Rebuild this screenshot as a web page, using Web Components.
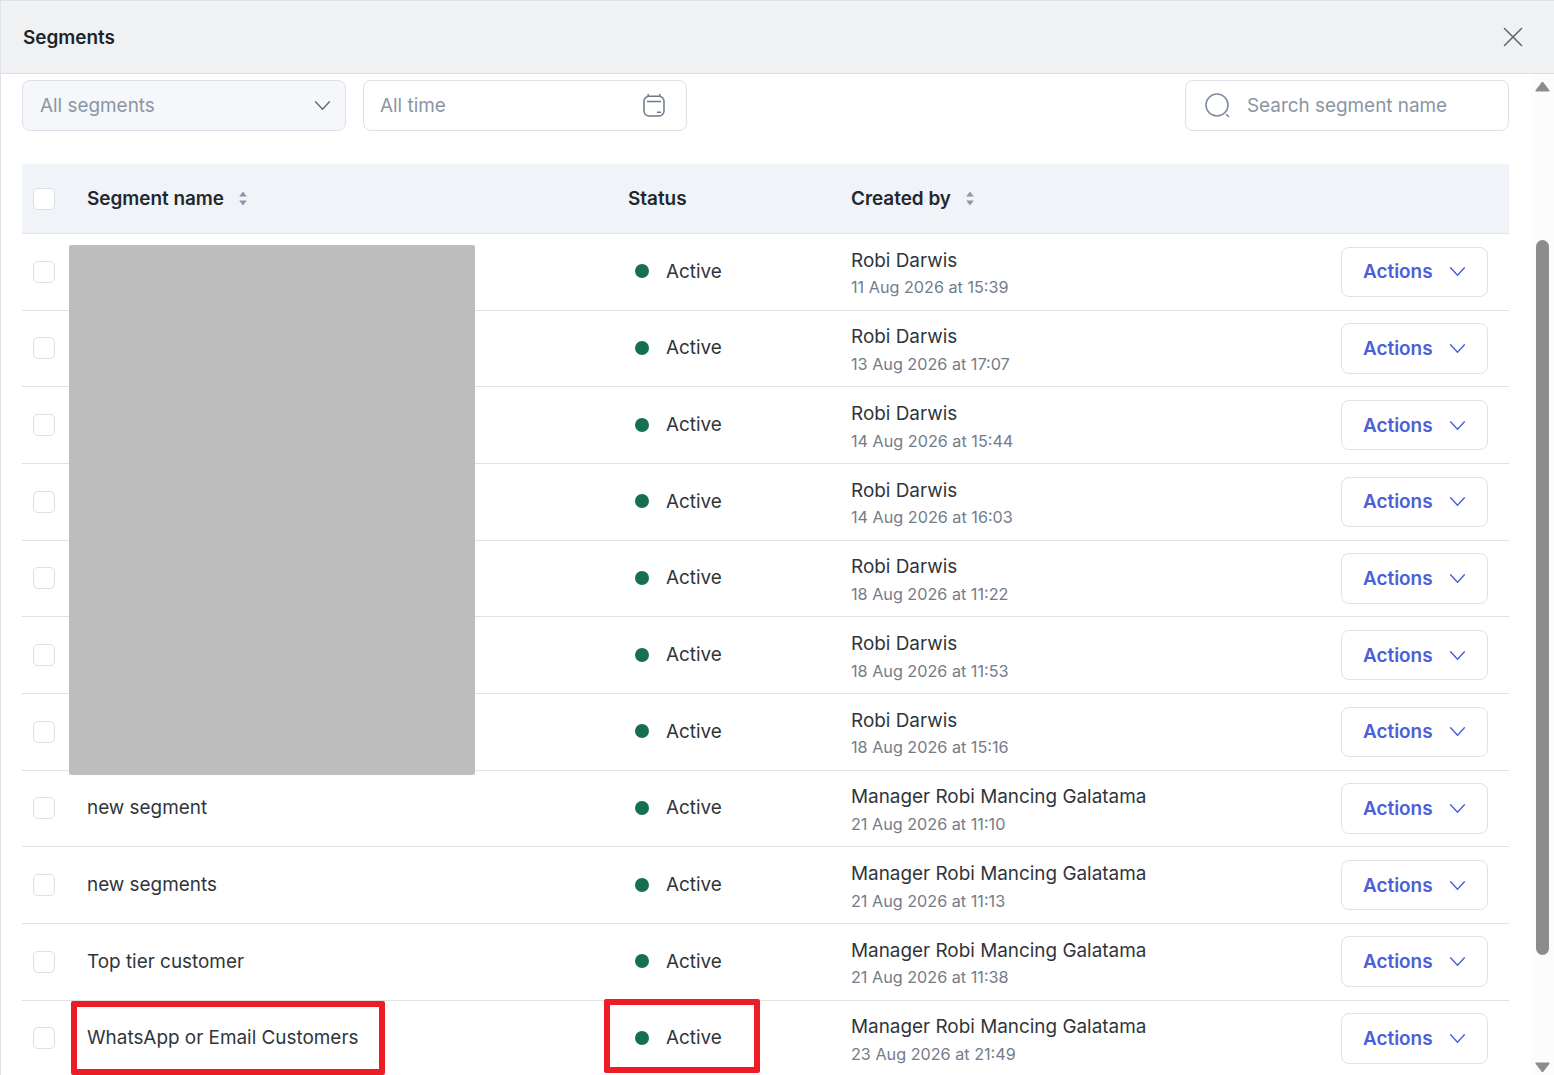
<!DOCTYPE html>
<html lang="en">

<head>
    <meta charset="UTF-8">
    <title>Segments</title>
    <style>
        html, body { margin: 0; height: 100%; overflow: hidden; background: #fff; }
        body { font-family: Inter, "Liberation Sans", sans-serif; }
    </style>
</head>

<body>
    <segments-page></segments-page>
    <script>
        const chevron = (color, w) => `<svg width="${w}" height="${w}" viewBox="0 0 16 16" fill="none" stroke="${color}" stroke-width="1.3" stroke-linecap="round" stroke-linejoin="round"><path d="M1.5 4.5 8 11.5l6.5-7"/></svg>`;

        customElements.define('modal-header', class extends HTMLElement {
            constructor() {
                super().attachShadow({ mode: 'open' }).innerHTML = `
          <style>
            :host {
              display: flex;
              align-items: center;
              justify-content: space-between;
              box-sizing: border-box;
              height: 74px;
              padding: 0 31px 0 22px;
              background: #eff1f3;
              border-top: 1px solid #dde1e8;
              border-bottom: 1px solid #dcdfe4;
            }
            h1 { margin: 0; font-size: 18.9px; font-weight: 600; color: #1f2429; }
            svg { display: block; }
          </style>
          <h1><slot></slot></h1>
          <svg width="20" height="20" viewBox="0 0 20 20" fill="none" stroke="#5d6875" stroke-width="1.6" stroke-linecap="round"><path d="M1.5 1.5l17 17M18.5 1.5l-17 17"/></svg>`;
            }
        });

        customElements.define('filter-box', class extends HTMLElement {
            constructor() {
                super().attachShadow({ mode: 'open' }).innerHTML = `
          <style>
            :host {
              display: flex;
              align-items: center;
              gap: 17px;
              box-sizing: border-box;
              width: 324px;
              height: 51px;
              padding: 0 20px 0 16px;
              border: 1px solid #dcdfe6;
              border-radius: 8px;
              background: #fff;
              color: #8b95a5;
              font-size: 18.9px;
            }
            :host([filled]) { background: #f6f7fa; padding: 0 14px 0 17px; }
            :host([reverse]) { flex-direction: row-reverse; justify-content: space-between; }
            :host([search]) { gap: 16px; padding-left: 18px; }
            .txt { flex: 1; }
            ::slotted(svg) { display: block; flex: none; }
          </style>
          <slot name="icon"></slot><span class="txt"><slot></slot></span>`;
            }
        });

        customElements.define('sort-arrows', class extends HTMLElement {
            constructor() {
                super().attachShadow({ mode: 'open' }).innerHTML = `
          <style>
            :host { display: inline-block; width: 10px; height: 15px; margin-left: 14px; }
            svg { display: block; }
          </style>
          <svg width="10" height="15" viewBox="0 0 10 15" fill="#8d97a8"><path d="M5 .5 8.8 5.5H1.2zM5 14.5 1.2 9.5h7.6z"/></svg>`;
            }
        });

        customElements.define('seg-check', class extends HTMLElement {
            constructor() {
                super().attachShadow({ mode: 'open' }).innerHTML = `
          <style>
            :host {
              display: block;
              box-sizing: border-box;
              width: 22px;
              height: 22px;
              margin-left: 11px;
              border: 1px solid #dcdfe4;
              border-radius: 5px;
              background: #fff;
            }
          </style>`;
            }
        });

        customElements.define('table-head', class extends HTMLElement {
            constructor() {
                super().attachShadow({ mode: 'open' }).innerHTML = `
          <style>
            :host {
              display: grid;
              grid-template-columns: 65px 541px 223px 1fr;
              align-items: center;
              box-sizing: border-box;
              height: 70px;
              background: #f0f3f8;
              border-bottom: 1px solid #dfe2e7;
              font-size: 18.9px;
              font-weight: 600;
              color: #23282d;
            }
            div { display: flex; align-items: center; }
          </style>
          <seg-check></seg-check>
          <div>Segment name<sort-arrows></sort-arrows></div>
          <div>Status</div>
          <div>Created by<sort-arrows></sort-arrows></div>`;
            }
        });

        customElements.define('actions-button', class extends HTMLElement {
            constructor() {
                super().attachShadow({ mode: 'open' }).innerHTML = `
          <style>
            :host {
              display: flex;
              align-items: center;
              justify-content: space-between;
              box-sizing: border-box;
              width: 147px;
              height: 50.5px;
              padding: 0 21px;
              border: 1px solid #dfe1e9;
              border-radius: 8px;
              color: #4a5fd9;
              font-size: 18.9px;
              font-weight: 600;
            }
            svg { display: block; }
          </style>
          Actions${chevron('#4a5fd9', 17)}`;
            }
        });

        customElements.define('segment-row', class extends HTMLElement {
            constructor() {
                super().attachShadow({ mode: 'open' }).innerHTML = `
          <style>
            :host {
              display: grid;
              grid-template-columns: 65px 541px 223px 1fr auto;
              align-items: center;
              box-sizing: border-box;
              height: 76.67px;
              padding-right: 21px;
              border-bottom: 1px solid #e0e1e5;
              font-size: 18.9px;
              color: #2f353b;
            }
            .name { margin-bottom: 1px; }
            .status { display: flex; align-items: center; gap: 17px; padding-left: 7px; margin-bottom: 1px; }
            .dot { width: 14px; height: 14px; border-radius: 50%; background: #17704d; }
            .who { line-height: 27.5px; margin-top: 5px; }
            .when { color: #737c8a; font-size: 16.2px; }
          </style>
          <seg-check></seg-check>
          <div class="name"><slot></slot></div>
          <div class="status"><span class="dot"></span><span>Active</span></div>
          <div class="who"><div>${this.getAttribute('by')}</div><div class="when">${this.getAttribute('at')}</div></div>
          <actions-button></actions-button>`;
            }
        });

        customElements.define('scroll-rail', class extends HTMLElement {
            constructor() {
                super().attachShadow({ mode: 'open' }).innerHTML = `
          <style>
            :host {
              display: flex;
              flex-direction: column;
              align-items: center;
              box-sizing: border-box;
              flex: none;
              width: 23px;
              padding-top: 7px;
              background: #fcfcfc;
            }
            svg { display: block; flex: none; }
            .thumb { width: 13px; height: 715px; margin: 148px 0 107px; flex: none; border-radius: 7px; background: #8c8c8c; }
          </style>
          <svg width="15" height="11" viewBox="0 0 15 11" fill="#8c8c8c" stroke="#8c8c8c" stroke-width="1.5" stroke-linejoin="round"><path d="M7.5 1.5 13.8 9.8H1.2z"/></svg>
          <div class="thumb"></div>
          <svg width="15" height="11" viewBox="0 0 15 11" fill="#8c8c8c" stroke="#8c8c8c" stroke-width="1.5" stroke-linejoin="round"><path d="M7.5 9.5 1.2 1.2h12.6z"/></svg>`;
            }
        });

        customElements.define('segments-page', class extends HTMLElement {
            constructor() {
                const rows = [
                    ['', 'Robi Darwis', '11 Aug 2026 at 15:39'],
                    ['', 'Robi Darwis', '13 Aug 2026 at 17:07'],
                    ['', 'Robi Darwis', '14 Aug 2026 at 15:44'],
                    ['', 'Robi Darwis', '14 Aug 2026 at 16:03'],
                    ['', 'Robi Darwis', '18 Aug 2026 at 11:22'],
                    ['', 'Robi Darwis', '18 Aug 2026 at 11:53'],
                    ['', 'Robi Darwis', '18 Aug 2026 at 15:16'],
                    ['new segment', 'Manager Robi Mancing Galatama', '21 Aug 2026 at 11:10'],
                    ['new segments', 'Manager Robi Mancing Galatama', '21 Aug 2026 at 11:13'],
                    ['Top tier customer', 'Manager Robi Mancing Galatama', '21 Aug 2026 at 11:38'],
                    ['WhatsApp or Email Customers', 'Manager Robi Mancing Galatama', '23 Aug 2026 at 21:49']
                ];
                super().attachShadow({ mode: 'open' }).innerHTML = `
          <style>
            :host {
              display: flex;
              flex-direction: column;
              position: relative;
              box-sizing: border-box;
              height: 1075px;
              overflow: hidden;
              border-left: 1px solid #dde1e8;
            }
            .body { display: flex; flex: 1; min-height: 0; }
            .main { flex: 1; min-width: 0; padding: 6px 22px 0 21px; }
            .filters { display: flex; gap: 17px; margin-bottom: 33px; }
            .filters .push { margin-left: auto; }
            .redact { position: absolute; left: 67.5px; top: 245px; width: 406.5px; height: 529.5px; background: #bdbdbd; border-radius: 2px; }
            .mark { position: absolute; box-sizing: border-box; border: 6.5px solid #ee1c25; border-radius: 2px; }
          </style>
          <modal-header>Segments</modal-header>
          <div class="body">
            <div class="main">
              <div class="filters">
                <filter-box filled reverse>All segments
                  <svg slot="icon" width="17" height="17" viewBox="0 0 16 16" fill="none" stroke="#5f6a78" stroke-width="1.3" stroke-linecap="round" stroke-linejoin="round"><path d="M1.5 4.5 8 11.5l6.5-7"/></svg>
                </filter-box>
                <filter-box reverse>All time
                  <svg slot="icon" width="24" height="26" viewBox="0 0 24 26" fill="none" stroke="#6d7989" stroke-width="1.5" stroke-linecap="round"><rect x="2" y="3.2" width="20" height="19.8" rx="5"/><path d="M6.2 1.6v1.6M17.8 1.6v1.6M5.5 8.5h13M15.5 19.2h3"/></svg>
                </filter-box>
                <filter-box class="push" search>
                  <svg slot="icon" width="27" height="27" viewBox="0 0 27 27" fill="none" stroke="#7f8ca0" stroke-width="1.6" stroke-linecap="round"><circle cx="13" cy="13" r="11"/><path d="M22.5 22.5l2 2"/></svg>
                  Search segment name
                </filter-box>
              </div>
              <table-head></table-head>
              ${rows.map(r => `<segment-row by="${r[1]}" at="${r[2]}">${r[0]}</segment-row>`).join('')}
            </div>
            <scroll-rail></scroll-rail>
          </div>
          <div class="redact"></div>
          <div class="mark" style="left:69.5px;top:1000.5px;width:314px;height:74px"></div>
          <div class="mark" style="left:603px;top:998.5px;width:156px;height:74px"></div>`;
            }
        });
    </script>
</body>

</html>
